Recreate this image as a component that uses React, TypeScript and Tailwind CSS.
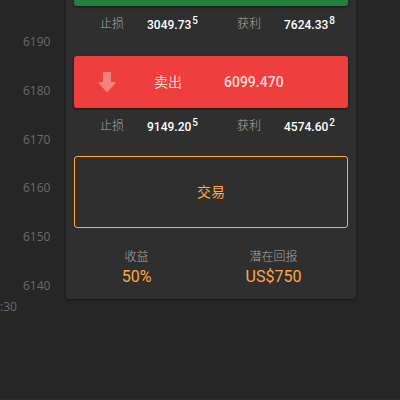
const priceLevels = ["6190", "6180", "6170", "6160", "6150", "6140"];

type Price = { value: string; pip: string };

const PriceField = ({ label, price }: { label: string; price: Price }) => (
  <div className="flex items-center gap-[23px] pl-[26px] text-xs leading-4">
    <dt className="font-light text-[#a8a8a8]">{label}</dt>
    <dd className="flex gap-px pt-0.5 font-medium text-white">
      {price.value}
      <span className="-mt-1 text-[10px]">{price.pip}</span>
    </dd>
  </div>
);

const Limits = ({ stopLoss, takeProfit }: { stopLoss: Price; takeProfit: Price }) => (
  <dl className="grid h-12 grid-cols-2 items-start pt-[9px]">
    <PriceField label="止损" price={stopLoss} />
    <PriceField label="获利" price={takeProfit} />
  </dl>
);

const Summary = ({ label, value }: { label: string; value: string }) => (
  <div className="flex flex-col items-center">
    <dt className="text-xs leading-4 font-light text-[#a8a8a8]">{label}</dt>
    <dd className="text-base leading-6 text-[#ffa940]">{value}</dd>
  </div>
);

const PriceAxis = () => (
  <aside className="w-[66px] shrink-0 pt-[34px] text-xs leading-4 text-[#6b6b6b] font-['Open_Sans','Noto_Sans_CJK_SC',sans-serif]">
    <ul className="flex h-[260px] flex-col justify-between pl-[23px]">
      {priceLevels.map((level) => (
        <li key={level}>{level}</li>
      ))}
    </ul>
    <p className="pt-[5px]">:30</p>
  </aside>
);

const DownArrow = () => (
  <svg width="18" height="20" viewBox="0 0 18 20" fill="#f58180" aria-hidden="true">
    <path d="M5 0h8v10h3.4q1.5 0.4 0.6 1.8L10 19.2q-1 1-2 0L1 11.8Q0.1 10.4 1.6 10H5z" />
  </svg>
);

export default function App() {
  return (
    <div className="flex min-h-screen items-start border-b border-[#302a2c] bg-[#262626] pr-11 font-[Roboto,'Noto_Sans_CJK_SC',sans-serif]">
      <PriceAxis />
      <main className="min-w-0 flex-1 rounded-b-[3px] bg-[#2f2f2f] pb-2.5 shadow-[0_1px_3px_rgba(0,0,0,0.5)]">
        <div className="px-2">
          <button
            type="button"
            aria-label="买入"
            className="block h-1.5 w-full rounded-b-[3px] bg-[#25803e] shadow-[0_1px_3px_rgba(0,0,0,0.5)]"
          />
          <div className="h-[50px]">
            <Limits
              stopLoss={{ value: "3049.73", pip: "5" }}
              takeProfit={{ value: "7624.33", pip: "8" }}
            />
          </div>
          <button
            type="button"
            className="flex h-[52px] w-full items-center rounded-[3px] bg-[#ee3e3d] pl-6 text-sm text-[#fcd9d9] shadow-[0_1px_3px_rgba(0,0,0,0.5)]"
          >
            <DownArrow />
            <span className="pl-[38px]">卖出</span>
            <span className="pl-[42px] font-medium">6099.470</span>
          </button>
          <Limits
            stopLoss={{ value: "9149.20", pip: "5" }}
            takeProfit={{ value: "4574.60", pip: "2" }}
          />
          <button
            type="button"
            className="h-[72px] w-full rounded-[3px] border border-[#ffa940] text-sm text-[#ffa940]"
          >
            交易
          </button>
        </div>
        <dl className="grid grid-cols-2 pt-[21px] pr-3.5 pl-0.5">
          <Summary label="收益" value="50%" />
          <Summary label="潜在回报" value="US$750" />
        </dl>
      </main>
    </div>
  );
}
